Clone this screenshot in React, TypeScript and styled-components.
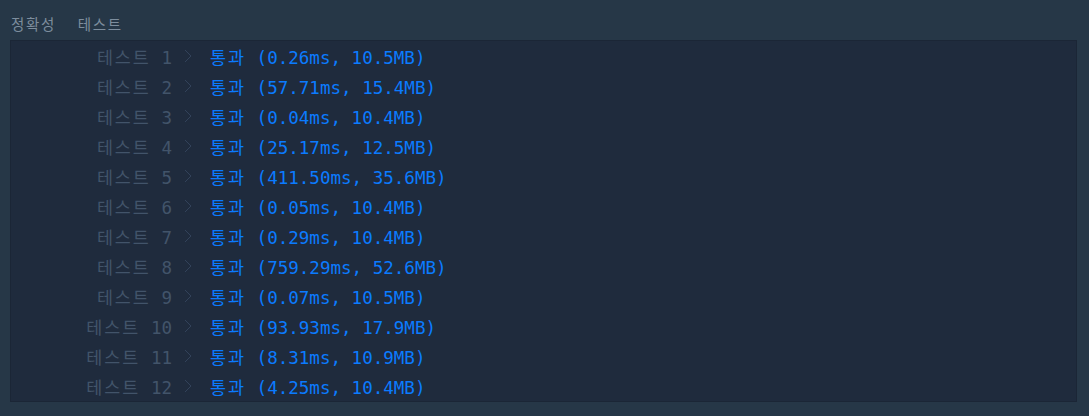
import styled, { createGlobalStyle } from "styled-components";

const GlobalStyle = createGlobalStyle`
  html, body {
    margin: 0;
    padding: 0;
    background: #263747;
  }
  body {
    font-family: "DejaVu Sans Mono", "Noto Sans CJK KR", monospace;
  }
`;

const results = [
  { time: "0.26ms", mem: "10.5MB" },
  { time: "57.71ms", mem: "15.4MB" },
  { time: "0.04ms", mem: "10.4MB" },
  { time: "25.17ms", mem: "12.5MB" },
  { time: "411.50ms", mem: "35.6MB" },
  { time: "0.05ms", mem: "10.4MB" },
  { time: "0.29ms", mem: "10.4MB" },
  { time: "759.29ms", mem: "52.6MB" },
  { time: "0.07ms", mem: "10.5MB" },
  { time: "93.93ms", mem: "17.9MB" },
  { time: "8.31ms", mem: "10.9MB" },
  { time: "4.25ms", mem: "10.4MB" },
];

const Page = styled.div`
  width: 1089px;
  height: 416px;
  box-sizing: border-box;
  padding: 15px 12px 0 10px;
  background: #263747;
`;

const Title = styled.div`
  display: flex;
  gap: 22px;
  height: 25px;
  font-family: "Noto Sans CJK KR", sans-serif;
  font-size: 14.5px;
  letter-spacing: 1.6px;
  line-height: 18px;
  color: #7d8d9d;
  padding-left: 1px;
`;

const Panel = styled.div`
  border: 1px solid #1b2636;
  background: #1f2b3d;
`;

const Row = styled.div`
  display: grid;
  grid-template-columns: 161px 38px 1fr;
  align-items: center;
  height: 30px;
  font-family: "DejaVu Sans Mono", "Noto Sans CJK KR", monospace;
  font-size: 17.55px;
  white-space: pre;
`;

const Hangul = styled.span`
  font-family: "Noto Sans CJK KR", sans-serif;
  font-size: 17.4px;
  letter-spacing: 2px;
`;

const Label = styled.span`
  text-align: right;
  color: #42546a;
`;

const Chevron = styled.span`
  display: flex;
  padding-left: 12px;
  color: #32425a;
`;

const Result = styled.span`
  color: #0b7bff;
`;

export default function App() {
  return (
    <Page>
      <GlobalStyle />
      <Title>
        <span>정확성</span>
        <span>테스트</span>
      </Title>
      <Panel>
        {results.map((r, i) => (
          <Row key={i}>
            <Label>
              <Hangul>테스트</Hangul> {i + 1}
            </Label>
            <Chevron>
              <svg width="8" height="14" viewBox="0 0 8 14">
                <path d="M1 1 L7 7 L1 13" fill="none" stroke="currentColor" strokeWidth="1" />
              </svg>
            </Chevron>
            <Result>
              <Hangul>통과</Hangul> ({r.time}, {r.mem})
            </Result>
          </Row>
        ))}
      </Panel>
    </Page>
  );
}
